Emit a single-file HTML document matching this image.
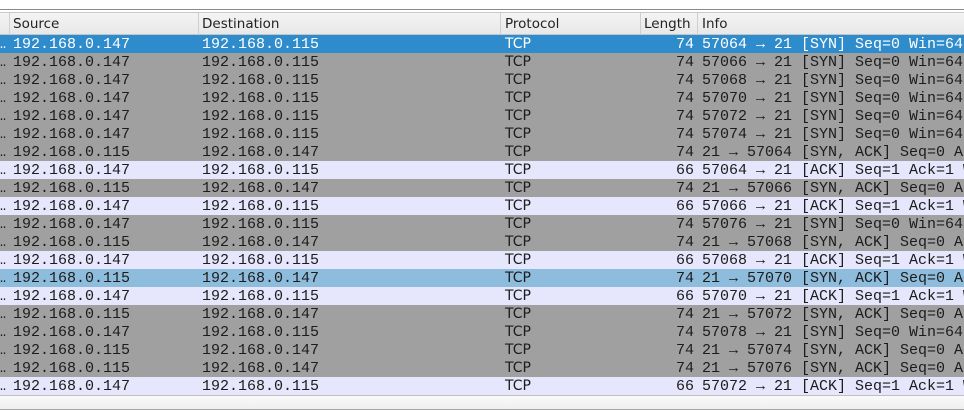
<!DOCTYPE html>
<html><head><meta charset="utf-8"><style>
body{margin:0;width:964px;height:410px;overflow:hidden;background:#fff;position:relative;font-family:"Liberation Mono","DejaVu Sans Mono",monospace;}
.top{position:absolute;left:0;top:9px;width:964px;height:1px;background:#8a8a8a}
.hdr{position:absolute;left:0;top:12px;width:964px;height:23px;background:linear-gradient(#f4f4f4,#e8e8e8);border-top:1px solid #c8c8c8;border-bottom:1px solid #c4c4c4;box-sizing:border-box;font-family:"DejaVu Sans","Liberation Sans",sans-serif;font-size:13.5px;color:#222}
.hdr span{position:absolute;top:3px}
.sep{position:absolute;top:0;width:1px;height:22px;background:#cfcfcf}
.r{position:absolute;left:0;width:964px;height:18px;font-size:15px;line-height:19px;color:#1c1c1c;white-space:nowrap;overflow:hidden}
.r span{position:absolute;top:0}
.p{font-family:"DejaVu Sans","Liberation Sans",sans-serif;font-size:14px}
.g{background:#a0a0a0}.l{background:#e6e6fc}.s{background:#2f8ccc;color:#fff}.b{background:#8ebcdc}
.bot{position:absolute;left:0;top:395px;width:964px;height:15px;background:linear-gradient(#fafafa,#efefef);border-top:1px solid #c0c0c0;border-bottom:1px solid #a8a8a8;box-sizing:border-box}
</style></head><body>
<div class="top"></div>
<div class="hdr">
<div class="sep" style="left:9px"></div><div class="sep" style="left:198px"></div><div class="sep" style="left:500px"></div><div class="sep" style="left:640px"></div><div class="sep" style="left:697px"></div>
<span style="left:13px">Source</span><span style="left:202px">Destination</span><span style="left:505px">Protocol</span><span style="left:644px">Length</span><span style="left:702px">Info</span>
</div>
<div id="rows"></div>
<script>
var d=[["s","147","115","74","57064 → 21 [SYN] Seq=0 Win=64240"],
["g","147","115","74","57066 → 21 [SYN] Seq=0 Win=64240"],
["g","147","115","74","57068 → 21 [SYN] Seq=0 Win=64240"],
["g","147","115","74","57070 → 21 [SYN] Seq=0 Win=64240"],
["g","147","115","74","57072 → 21 [SYN] Seq=0 Win=64240"],
["g","147","115","74","57074 → 21 [SYN] Seq=0 Win=64240"],
["g","115","147","74","21 → 57064 [SYN, ACK] Seq=0 Ack=1"],
["l","147","115","66","57064 → 21 [ACK] Seq=1 Ack=1 Win"],
["g","115","147","74","21 → 57066 [SYN, ACK] Seq=0 Ack=1"],
["l","147","115","66","57066 → 21 [ACK] Seq=1 Ack=1 Win"],
["g","147","115","74","57076 → 21 [SYN] Seq=0 Win=64240"],
["g","115","147","74","21 → 57068 [SYN, ACK] Seq=0 Ack=1"],
["l","147","115","66","57068 → 21 [ACK] Seq=1 Ack=1 Win"],
["b","115","147","74","21 → 57070 [SYN, ACK] Seq=0 Ack=1"],
["l","147","115","66","57070 → 21 [ACK] Seq=1 Ack=1 Win"],
["g","115","147","74","21 → 57072 [SYN, ACK] Seq=0 Ack=1"],
["g","147","115","74","57078 → 21 [SYN] Seq=0 Win=64240"],
["g","115","147","74","21 → 57074 [SYN, ACK] Seq=0 Ack=1"],
["g","115","147","74","21 → 57076 [SYN, ACK] Seq=0 Ack=1"],
["l","147","115","66","57072 → 21 [ACK] Seq=1 Ack=1 Win"]];
var h="";
d.forEach(function(r,i){h+='<div class="r '+r[0]+'" style="top:'+(35+18*i)+'px"><span style="left:-3px">…</span><span style="left:13px">192.168.0.'+r[1]+'</span><span style="left:202px">192.168.0.'+r[2]+'</span><span class="p" style="left:505px">TCP</span><span style="left:676px">'+r[3]+'</span><span style="left:702px">'+r[4]+'</span></div>';});
document.getElementById("rows").innerHTML=h;
</script>
<div class="bot"></div>
</body></html>
